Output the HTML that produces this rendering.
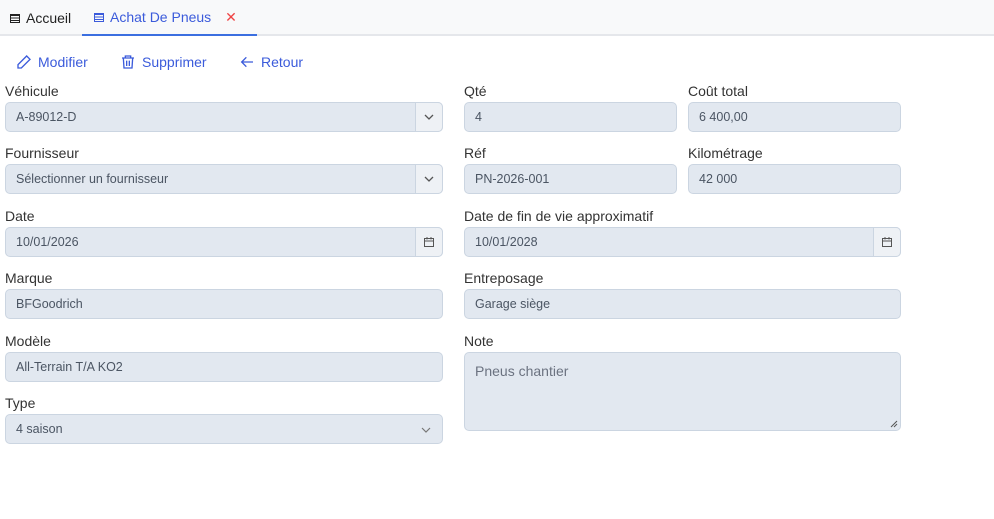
<!DOCTYPE html><html><head><meta charset="utf-8"><style>
*{box-sizing:border-box;margin:0;padding:0}
body{width:994px;height:519px;background:#fff;font-family:"Liberation Sans",Arial,sans-serif;position:relative;overflow:hidden}
.tabs{position:absolute;left:0;top:0;width:994px;height:36px;background:#f8f9fa;border-bottom:2px solid #e5e7eb}
.tab{position:absolute;top:0;height:36px;line-height:34px;font-size:14px;display:flex;align-items:center}
.ic{display:inline-block;width:10px;height:9px;margin-right:6px;border:1px solid currentColor;background:repeating-linear-gradient(180deg,currentColor 0 1px,transparent 1px 2.5px)}
.lbl{position:absolute;font-size:14px;color:#333;line-height:16px}
.in{position:absolute;height:30px;background:#e2e8f0;border:1px solid #cbd5e1;border-radius:5px;font-size:12.5px;color:#4b5563;line-height:28px;padding-left:10px}
.btn{position:absolute;width:28px;top:-1px;right:-1px;height:30px;border:1px solid #cbd5e1;border-radius:0 5px 5px 0;background:#eef1f5;display:flex;align-items:center;justify-content:center}
.act{position:absolute;top:54px;font-size:14px;color:#3b5bdb;display:flex;align-items:center;gap:6px}
</style></head><body>
<div class="tabs">
<div class="tab" style="left:10px;color:#222"><span class="ic"></span>Accueil</div>
<div class="tab" style="left:82px;width:175px;padding-left:12px;color:#3b5bdb;border-bottom:2px solid #3b6fe0;height:36px"><span class="ic"></span>Achat De Pneus <span style="color:#ef4444;margin-left:14px">✕</span></div>
</div>
<div class="act" style="left:16px"><svg width="16" height="16" viewBox="0 0 24 24" fill="none" stroke="#3b5bdb" stroke-width="2"><path d="M16 3l5 5L8 21H3v-5z"/></svg>Modifier</div>
<div class="act" style="left:120px"><svg width="16" height="16" viewBox="0 0 24 24" fill="none" stroke="#3b5bdb" stroke-width="2"><path d="M3 6h18M8 6V3h8v3M5 6l1 15h12l1-15M10 10v8M14 10v8"/></svg>Supprimer</div>
<div class="act" style="left:239px"><svg width="16" height="16" viewBox="0 0 24 24" fill="none" stroke="#3b5bdb" stroke-width="2"><path d="M21 12H4M11 5l-7 7 7 7"/></svg>Retour</div>

<div class="lbl" style="left:5px;top:83px">Véhicule</div>
<div class="in" style="left:5px;top:102px;width:438px">A-89012-D<div class="btn"><svg width="12" height="12" viewBox="0 0 12 12" fill="none" stroke="#555" stroke-width="1.3"><path d="M2 4l4 4 4-4"/></svg></div></div>
<div class="lbl" style="left:464px;top:83px">Qté</div>
<div class="in" style="left:464px;top:102px;width:213px">4</div>
<div class="lbl" style="left:688px;top:83px">Coût total</div>
<div class="in" style="left:688px;top:102px;width:213px">6 400,00</div>

<div class="lbl" style="left:5px;top:145px">Fournisseur</div>
<div class="in" style="left:5px;top:164px;width:438px">Sélectionner un fournisseur<div class="btn"><svg width="12" height="12" viewBox="0 0 12 12" fill="none" stroke="#555" stroke-width="1.3"><path d="M2 4l4 4 4-4"/></svg></div></div>
<div class="lbl" style="left:464px;top:145px">Réf</div>
<div class="in" style="left:464px;top:164px;width:213px">PN-2026-001</div>
<div class="lbl" style="left:688px;top:145px">Kilométrage</div>
<div class="in" style="left:688px;top:164px;width:213px">42 000</div>

<div class="lbl" style="left:5px;top:208px">Date</div>
<div class="in" style="left:5px;top:227px;width:438px">10/01/2026<div class="btn"><svg width="12" height="12" viewBox="0 0 12 12" fill="none" stroke="#555" stroke-width="1"><rect x="1.5" y="2.5" width="9" height="8"/><path d="M1.5 5h9M4 1v2.5M8 1v2.5"/></svg></div></div>
<div class="lbl" style="left:464px;top:208px">Date de fin de vie approximatif</div>
<div class="in" style="left:464px;top:227px;width:437px">10/01/2028<div class="btn"><svg width="12" height="12" viewBox="0 0 12 12" fill="none" stroke="#555" stroke-width="1"><rect x="1.5" y="2.5" width="9" height="8"/><path d="M1.5 5h9M4 1v2.5M8 1v2.5"/></svg></div></div>

<div class="lbl" style="left:5px;top:270px">Marque</div>
<div class="in" style="left:5px;top:289px;width:438px">BFGoodrich</div>
<div class="lbl" style="left:464px;top:270px">Entreposage</div>
<div class="in" style="left:464px;top:289px;width:437px">Garage siège</div>

<div class="lbl" style="left:5px;top:333px">Modèle</div>
<div class="in" style="left:5px;top:352px;width:438px">All-Terrain T/A KO2</div>
<div class="lbl" style="left:464px;top:333px">Note</div>
<div class="in" style="left:464px;top:352px;width:437px;height:79px;font-size:14px;line-height:16px;padding-top:10px;color:#6b7280">Pneus chantier<svg style="position:absolute;right:2px;bottom:2px" width="8" height="8" viewBox="0 0 8 8" stroke="#555"><path d="M1 7l6-6M4 7l3-3"/></svg></div>

<div class="lbl" style="left:5px;top:395px">Type</div>
<div class="in" style="left:5px;top:414px;width:438px">4 saison<svg style="position:absolute;right:10px;top:9px" width="12" height="12" viewBox="0 0 12 12" fill="none" stroke="#777" stroke-width="1.2"><path d="M2 4l4 4 4-4"/></svg></div>
</body></html>
